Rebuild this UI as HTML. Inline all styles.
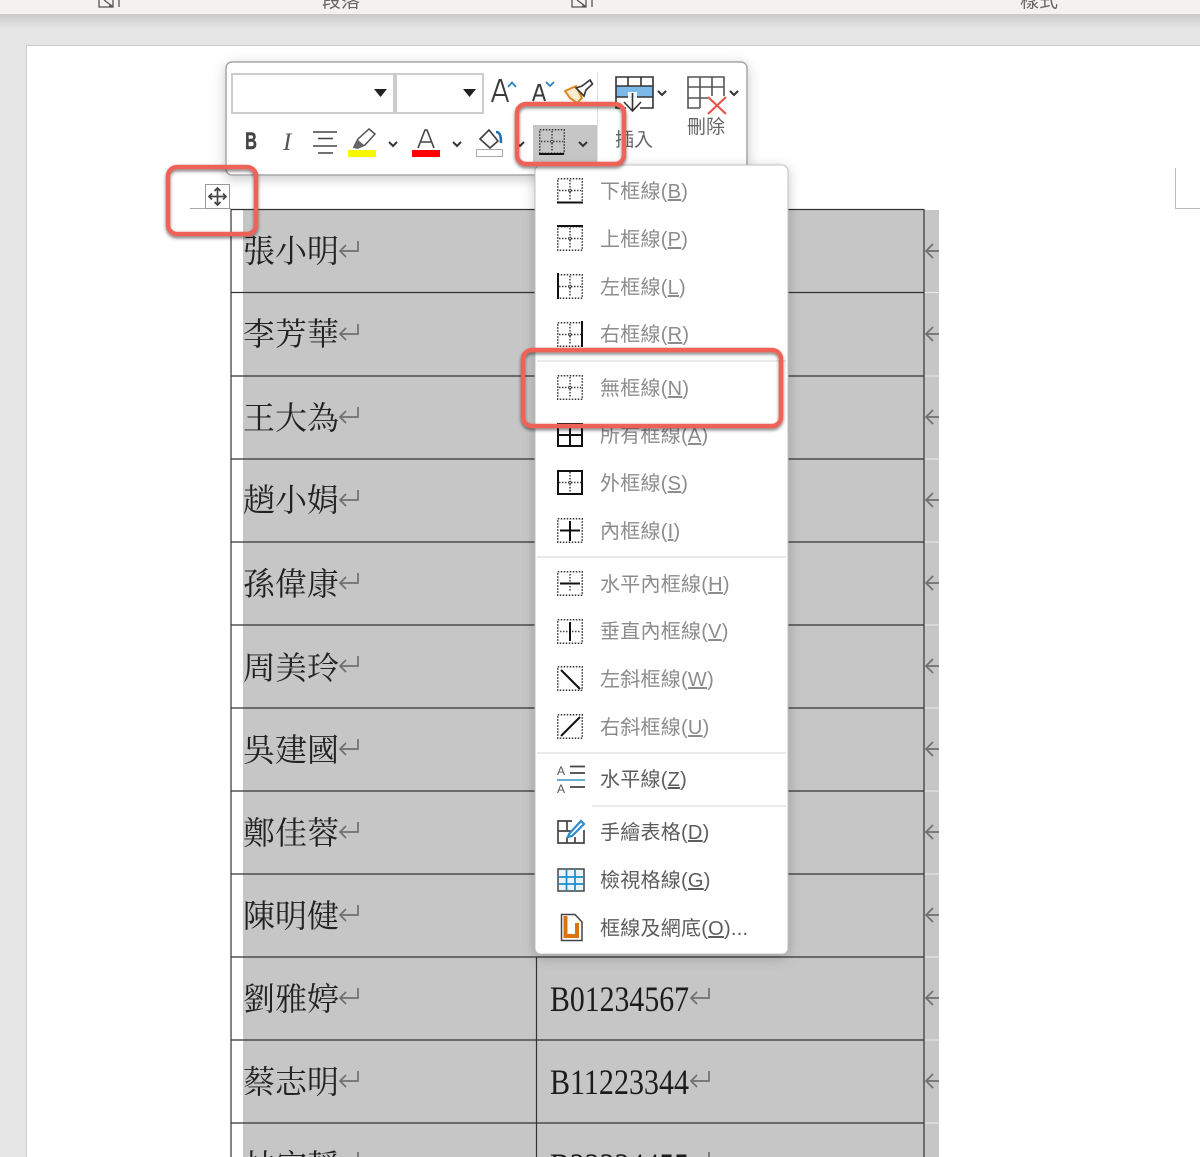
<!DOCTYPE html>
<html lang="zh-Hant">
<head>
<meta charset="utf-8">
<title>Word 表格框線</title>
<style>
html,body{margin:0;padding:0;width:1200px;height:1157px;overflow:hidden;background:#fff}
svg{display:block}
.n{font-family:"Liberation Serif","Noto Serif CJK TC","Noto Serif CJK SC",serif;font-size:32px;fill:#222}
.c{font-family:"Liberation Serif",serif;font-size:36px;fill:#1c1c1c}
.m{font-family:"Liberation Sans","Noto Sans CJK TC",sans-serif;font-size:20px;fill:#8c8c8c;letter-spacing:.25px}
.a{fill:#5c5c5c}
.t{font-family:"Liberation Sans","Noto Sans CJK TC",sans-serif;font-size:19px;fill:#666}
.u{text-decoration:underline}
.ret{fill:none;stroke:#707070;stroke-width:1.7}
.chev{fill:none;stroke:#333;stroke-width:2}
.sl{stroke:#111;stroke-width:2;fill:none}
</style>
</head>
<body>
<svg width="1200" height="1157" viewBox="0 0 1200 1157" xmlns="http://www.w3.org/2000/svg">
<defs>
<linearGradient id="sh" x1="0" y1="0" x2="0" y2="1"><stop offset="0" stop-color="#c9c9c9"/><stop offset="1" stop-color="#e6e6e6"/></linearGradient>
<filter id="ds" x="-10%" y="-10%" width="120%" height="125%"><feDropShadow dx="0" dy="3" stdDeviation="6" flood-color="#000" flood-opacity=".22"/></filter>
<filter id="rs" x="-15%" y="-15%" width="130%" height="130%"><feDropShadow dx="0" dy="2" stdDeviation="1.5" flood-color="#000" flood-opacity=".5"/></filter>
<clipPath id="rc"><rect x="924" y="200" width="15" height="957"/></clipPath>
<g id="dots"><rect x=".75" y=".75" width="24.500" height="23.500" fill="none" stroke="#333" stroke-width="1.500" stroke-dasharray="1.500 1.500"/></g>
<g id="grid"><use href="#dots"/><path d="M13 2V23M2 12.500H24" fill="none" stroke="#444" stroke-width="1.500" stroke-dasharray="1.500 1.500"/><circle cx="13" cy="12.500" r="1.300" fill="#fff" stroke="#444"/></g>
</defs>

<!-- app background -->
<rect width="1200" height="1157" fill="#e6e6e6"/>
<rect y="14" width="1200" height="14" fill="url(#sh)"/>
<rect width="1200" height="14" fill="#f3f2f1"/>
<text x="322" y="7" class="t" font-size="19">段落</text>
<text x="1020" y="7" class="t">樣式</text>
<path d="M99 0V7H113V0M104 0L112 6M109 6H113V2M119 0V7" fill="none" stroke="#555" stroke-width="1.300"/>
<path d="M572 0V7H586V0M577 0L585 6M582 6H586V2M592 0V7" fill="none" stroke="#555" stroke-width="1.300"/>

<!-- page -->
<rect x="26.500" y="45.500" width="1180" height="1120" fill="#fff" stroke="#ccc"/>
<path d="M1175.500 168V208.500H1200" fill="none" stroke="#bbb"/>

<!-- table shading -->
<rect x="243" y="210" width="696" height="947" fill="#c6c6c6"/>
<path d="M924 292.500H939M924 376H939M924 459H939M924 542H939M924 625H939M924 708H939M924 791H939M924 874H939M924 957H939M924 1040H939M924 1123H939" stroke="#e9e9e9"/>
<path d="M231 209.500H924M231 292.500H924M231 376H924M231 459H924M231 542H924M231 625H924M231 708H924M231 791H924M231 874H924M231 957H924M231 1040H924M231 1123H924" stroke="#333" stroke-width="1.200"/>
<path d="M231 209V1157M536.500 957V1157M924 209V1157" stroke="#333" stroke-width="1.200"/>
<path d="M190 208.500H231" stroke="#aaa"/>

<!-- names -->
<text x="243" y="262" class="n">張小明</text>
<text x="243" y="345" class="n">李芳華</text>
<text x="243" y="429" class="n">王大為</text>
<text x="243" y="511" class="n">趙小娟</text>
<text x="243" y="595" class="n">孫偉康</text>
<text x="243" y="679" class="n">周美玲</text>
<text x="243" y="761" class="n">吳建國</text>
<text x="243" y="844" class="n">鄭佳蓉</text>
<text x="243" y="927" class="n">陳明健</text>
<text x="243" y="1010" class="n">劉雅婷</text>
<text x="243" y="1093" class="n">蔡志明</text>
<text x="243" y="1177" class="n">林宜靜</text>

<!-- codes -->
<text x="550" y="1011" class="c" textLength="139" lengthAdjust="spacingAndGlyphs">B01234567</text>
<text x="550" y="1094" class="c" textLength="139" lengthAdjust="spacingAndGlyphs">B11223344</text>
<text x="550" y="1178" class="c" textLength="139" lengthAdjust="spacingAndGlyphs">B22334455</text>

<!-- return marks -->
<g class="ret">
<path d="M358 241V251H340M346 245L340 251L346 257"/>
<path d="M358 324V334H340M346 328L340 334L346 340"/>
<path d="M358 407V417H340M346 411L340 417L346 423"/>
<path d="M358 490V500H340M346 494L340 500L346 506"/>
<path d="M358 573V583H340M346 577L340 583L346 589"/>
<path d="M358 656V666H340M346 660L340 666L346 672"/>
<path d="M358 739V749H340M346 743L340 749L346 755"/>
<path d="M358 822V832H340M346 826L340 832L346 838"/>
<path d="M358 905V915H340M346 909L340 915L346 921"/>
<path d="M358 988V998H340M346 992L340 998L346 1004"/>
<path d="M358 1071V1081H340M346 1075L340 1081L346 1087"/>
<path d="M709 988V998H691M697 992L691 998L697 1004"/>
<path d="M709 1071V1081H691M697 1075L691 1081L697 1087"/>
<path d="M709 1152V1157M358 1152V1157"/>
</g>
<g class="ret" clip-path="url(#rc)" stroke-width="2">
<path d="M942 251H926M933 244L926 251L933 258"/>
<path d="M942 334H926M933 327L926 334L933 341"/>
<path d="M942 417H926M933 410L926 417L933 424"/>
<path d="M942 500H926M933 493L926 500L933 507"/>
<path d="M942 583H926M933 576L926 583L933 590"/>
<path d="M942 666H926M933 659L926 666L933 673"/>
<path d="M942 749H926M933 742L926 749L933 756"/>
<path d="M942 832H926M933 825L926 832L933 839"/>
<path d="M942 915H926M933 908L926 915L933 922"/>
<path d="M942 998H926M933 991L926 998L933 1005"/>
<path d="M942 1081H926M933 1074L926 1081L933 1088"/>
</g>

<!-- move handle -->
<rect x="205.500" y="184.500" width="24" height="24" fill="#fff" stroke="#999"/>
<path d="M217.500 188V205M209 196.500H226M214.500 191L217.500 188L220.500 191M214.500 202L217.500 205L220.500 202M212 193.500L209 196.500L212 199.500M223 193.500L226 196.500L223 199.500" fill="none" stroke="#444" stroke-width="1.700"/>

<!-- mini toolbar -->
<rect x="226" y="62" width="521" height="113" rx="6" fill="#fff" stroke="#a6a6a6" stroke-width="1.500" filter="url(#ds)"/>
<rect x="232" y="74" width="162" height="39" fill="#fff" stroke="#ccc" stroke-width="2"/>
<rect x="396" y="74" width="87" height="39" fill="#fff" stroke="#ccc" stroke-width="2"/>
<path d="M374 89H387L380.500 97ZM463 89H476L469.500 97Z" fill="#222"/>
<path d="M597.500 72V165" stroke="#e3e3e3"/>

<!-- A+ / A- -->
<path d="M492 102L499.500 80H501L508 102M494.500 95H506" fill="none" stroke="#3a3a3a" stroke-width="2"/>
<path d="M508 87L512 82.500L516 87" fill="none" stroke="#2e86c1" stroke-width="1.800"/>
<path d="M533 101L538.500 85H540L545 101M535 95.500H543.500" fill="none" stroke="#3a3a3a" stroke-width="2"/>
<path d="M546 82L550 86L554 82" fill="none" stroke="#2e86c1" stroke-width="1.800"/>
<!-- format brush -->
<path d="M565 91L576 86L582 98L577 103L570 98Z" fill="#fdeccf" stroke="#e08a1e" stroke-width="2"/>
<path d="M576 88L582 86L590 80L592.500 84L586 90L584 96Z" fill="#fff" stroke="#3a3a3a" stroke-width="1.700"/>

<!-- insert icon -->
<rect x="616" y="86" width="37" height="11" fill="#7db9e8"/>
<path d="M616 97V77H653V97M616 86H653M628 77V86M641 77V86M616 97H653M616 97V108H626M653 97V108H640" fill="none" stroke="#333" stroke-width="1.600"/>
<rect x="628" y="92" width="9" height="20" fill="#fff" opacity=".9"/>
<path d="M632.500 93V111M624 102L632.500 111L641 102" fill="none" stroke="#333" stroke-width="1.600"/>
<path class="chev" d="M658 91L662 95L666 91"/>

<!-- delete icon -->
<path d="M700 108H688V77H724V96M688 87H724M688 98H708M700 77V108M712 77V96" fill="none" stroke="#555" stroke-width="1.600"/>
<path d="M708 97L726 114M726 97L708 114" stroke="#e8554f" stroke-width="2.200" fill="none"/>
<path class="chev" d="M730 91L734 95L738 91"/>
<text x="615" y="146" class="t">插入</text>
<text x="687" y="133" class="t">刪除</text>

<!-- row 2 -->
<text x="245" y="149" font-family="Liberation Sans,sans-serif" font-weight="700" font-size="24" fill="#444" stroke="#444" stroke-width=".4" textLength="12" lengthAdjust="spacingAndGlyphs">B</text>
<text x="283" y="150" font-family="Liberation Serif,serif" font-style="italic" font-size="25" fill="#555">I</text>
<path d="M313 132H337M318 138.500H333M313 146H337M318 153H333" stroke="#444" stroke-width="1.600"/>
<path d="M354 147L358 139L369 129L375 134L365 145L358 148Z" fill="#fff" stroke="#555" stroke-width="1.500"/>
<path d="M353 148L358 140L364 145L358 149Z" fill="#666"/>
<rect x="348" y="150" width="28" height="7" fill="#f7f700"/>
<path class="chev" d="M389 142L393 146L397 142"/>
<path d="M418 148L425 130H427L434 148M420 142H432" fill="none" stroke="#444" stroke-width="1.600"/>
<rect x="412" y="150" width="28" height="7" fill="#f00"/>
<path class="chev" d="M453 142L457 146L461 142"/>
<path d="M480 139L489 130L498 141L490 148Z" fill="#fff" stroke="#444" stroke-width="1.700"/>
<path d="M496 132C500 132 501 136 501 143" fill="none" stroke="#1c6fb0" stroke-width="2.500"/>
<rect x="476.500" y="149.500" width="26" height="7" fill="#fff" stroke="#aaa"/>
<path class="chev" d="M516 142L520 146L524 142"/>

<!-- border button -->
<rect x="533" y="125" width="64" height="37" fill="#c6c6c6"/>
<use href="#grid" x="539" y="129"/>
<path d="M539 154H564" stroke="#111" stroke-width="2"/>
<path class="chev" d="M579 142L583 146L587 142"/>

<!-- dropdown menu -->
<rect x="535" y="165" width="253" height="789" rx="6" fill="#fff" stroke="#c0c0c0" filter="url(#ds)"/>
<path d="M537 361H786M537 557H786M537 753H786M592 806H786" stroke="#e4e4e4" stroke-width="1.500"/>

<use href="#grid" x="557" y="178"/><path class="sl" d="M557 202.500H583"/>
<use href="#grid" x="557" y="226"/><path class="sl" d="M557 226H583"/>
<use href="#grid" x="557" y="274"/><path class="sl" d="M558 273V299"/>
<use href="#grid" x="557" y="322"/><path class="sl" d="M582 321V347"/>
<use href="#grid" x="557" y="375"/>
<path d="M558 424H582V446H558ZM570 424V446M558 435H582" fill="none" stroke="#111" stroke-width="2"/>
<use href="#grid" x="557" y="470"/><rect x="558" y="471" width="24" height="23" fill="none" stroke="#111" stroke-width="2"/>
<use href="#dots" x="557" y="518"/><path class="sl" d="M570 521V541M560 530.500H580"/>
<use href="#dots" x="557" y="571"/><path d="M570 574V592" stroke="#444" stroke-dasharray="1.500 1.500" stroke-width="1.500"/><path class="sl" d="M560 583.500H580"/>
<use href="#dots" x="557" y="619"/><path d="M560 631.500H580" stroke="#444" stroke-dasharray="1.500 1.500" stroke-width="1.500"/><path class="sl" d="M570 622V641"/>
<use href="#dots" x="557" y="666"/><path class="sl" d="M561 670L580 689"/>
<use href="#dots" x="557" y="714"/><path class="sl" d="M561 736L580 717"/>

<!-- horizontal line icon -->
<text x="557" y="775" font-family="Liberation Sans,sans-serif" font-size="12" fill="#555">A</text>
<text x="557" y="793" font-family="Liberation Sans,sans-serif" font-size="12" fill="#555">A</text>
<path d="M557 780H585" stroke="#3a93c9" stroke-width="1.400"/>
<path d="M570 766.500H585M570 773H585M570 787H585" stroke="#444" stroke-width="1.700"/>
<!-- draw table icon -->
<path d="M572 821H558V843H584V830M558 831H571M567 821V831M567 837V843M575 837V843" fill="none" stroke="#444" stroke-width="1.700"/>
<path d="M569 834L581 821L584 824L572 836L568 837Z" fill="#fff" stroke="#2e8ccb" stroke-width="2.200"/>
<!-- gridlines icon -->
<rect x="558" y="869" width="26" height="22" fill="#eaf5fc" stroke="#444" stroke-width="1.500"/>
<path d="M566.500 869V891M575 869V891M558 877H584M558 884H584" stroke="#1f8ac9" stroke-width="1.700"/>
<!-- borders and shading icon -->
<path d="M561.500 914.500H575L582 922V940.500H561.500Z" fill="#fff" stroke="#444" stroke-width="1.500"/>
<path d="M565.500 916V936H577V923" fill="none" stroke="#d9730f" stroke-width="4"/>

<g class="m">
<text x="600" y="198">下框線(<tspan class="u">B</tspan>)</text>
<text x="600" y="246">上框線(<tspan class="u">P</tspan>)</text>
<text x="600" y="294">左框線(<tspan class="u">L</tspan>)</text>
<text x="600" y="341">右框線(<tspan class="u">R</tspan>)</text>
<text x="600" y="395">無框線(<tspan class="u">N</tspan>)</text>
<text x="600" y="442">所有框線(<tspan class="u">A</tspan>)</text>
<text x="600" y="490">外框線(<tspan class="u">S</tspan>)</text>
<text x="600" y="538">內框線(<tspan class="u">I</tspan>)</text>
<text x="600" y="591">水平內框線(<tspan class="u">H</tspan>)</text>
<text x="600" y="638">垂直內框線(<tspan class="u">V</tspan>)</text>
<text x="600" y="686">左斜框線(<tspan class="u">W</tspan>)</text>
<text x="600" y="734">右斜框線(<tspan class="u">U</tspan>)</text>
<text x="600" y="786" class="a">水平線(<tspan class="u">Z</tspan>)</text>
<text x="600" y="839" class="a">手繪表格(<tspan class="u">D</tspan>)</text>
<text x="600" y="887" class="a">檢視格線(<tspan class="u">G</tspan>)</text>
<text x="600" y="935" class="a">框線及網底(<tspan class="u">O</tspan>)...</text>
</g>

<!-- red callouts -->
<g fill="none" stroke="#ee6259" stroke-width="4.500" filter="url(#rs)">
<rect x="517" y="104" width="107" height="60" rx="9"/>
<rect x="168" y="167" width="88" height="67" rx="9"/>
<rect x="523" y="350" width="258" height="76" rx="9"/>
</g>
</svg>
</body>
</html>
